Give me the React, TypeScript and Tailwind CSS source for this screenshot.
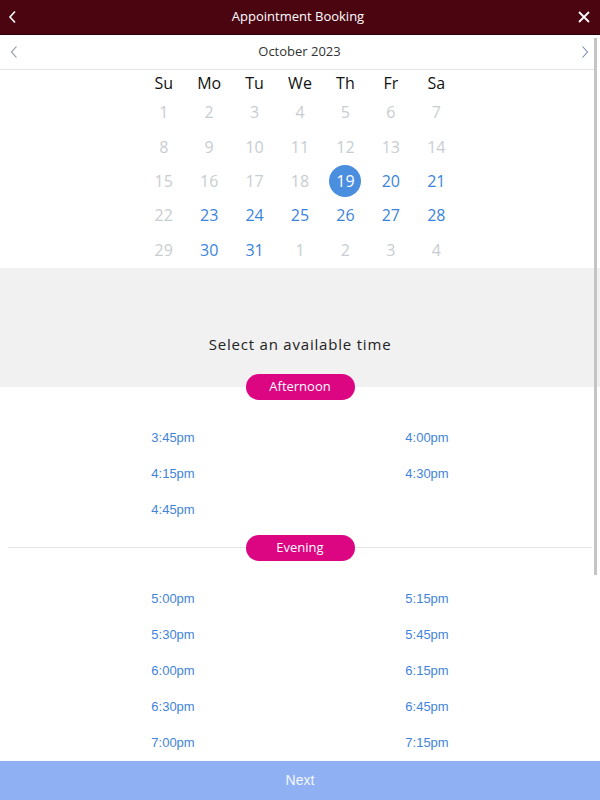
import React from "react";

const weekdays = ["Su", "Mo", "Tu", "We", "Th", "Fr", "Sa"];

type Day = { n: number; state: "off" | "on" | "sel" };

const days: Day[] = [];
for (let i = 1; i <= 18; i++) days.push({ n: i, state: "off" });
days.push({ n: 19, state: "sel" });
days.push({ n: 20, state: "on" });
days.push({ n: 21, state: "on" });
days.push({ n: 22, state: "off" });
for (let i = 23; i <= 28; i++) days.push({ n: i, state: "on" });
days.push({ n: 29, state: "off" });
days.push({ n: 30, state: "on" });
days.push({ n: 31, state: "on" });
for (let i = 1; i <= 4; i++) days.push({ n: i, state: "off" });

const afternoon = ["3:45pm", "4:00pm", "4:15pm", "4:30pm", "4:45pm"];
const evening = [
  "5:00pm",
  "5:15pm",
  "5:30pm",
  "5:45pm",
  "6:00pm",
  "6:15pm",
  "6:30pm",
  "6:45pm",
  "7:00pm",
  "7:15pm",
];

function Pill({ label }: { label: string }) {
  return (
    <div className="w-[109px] h-[26px] rounded-full bg-[#dc0582] text-white text-[13px] flex items-center justify-center font-['Open_Sans',sans-serif]">
      {label}
    </div>
  );
}

function Times({ items }: { items: string[] }) {
  return (
    <div className="w-[508px] mx-auto grid grid-cols-2">
      {items.map((t) => (
        <div
          key={t}
          className="h-[36px] flex items-center justify-center text-[13px] text-[#3f84da] font-['Liberation_Sans',Arial,sans-serif]"
        >
          {t}
        </div>
      ))}
    </div>
  );
}

export default function App() {
  return (
    <div className="w-[600px] h-[800px] flex flex-col bg-white font-['Open_Sans',sans-serif] overflow-hidden">
      <div className="h-[35px] shrink-0 bg-[#4a0511] border-b border-[#2a0208] flex items-center justify-between px-[7px] text-white">
        <svg width="12" height="14" viewBox="0 0 12 14" fill="none">
          <path d="M8 1.5L3 7l5 5.5" stroke="white" strokeWidth="1.6" />
        </svg>
        <div className="text-[13px] tracking-[0px]">Appointment Booking</div>
        <svg width="14" height="14" viewBox="0 0 14 14" fill="none" className="mr-[2px]">
          <path d="M2 2l10 10M12 2L2 12" stroke="white" strokeWidth="1.8" />
        </svg>
      </div>

      <div className="relative flex-1 overflow-hidden">
        <div className="absolute right-[3px] top-[3px] w-[3px] h-[537px] bg-[#c4c4c4]" />

        <div className="h-[35px] border-b border-[#e6e6e6] mr-[6px] flex items-center justify-between pl-[9px] pr-[4px]">
          <svg width="10" height="14" viewBox="0 0 10 14" fill="none">
            <path d="M7.5 1.5L2.5 7l5 5.5" stroke="#8a8f94" strokeWidth="1.1" />
          </svg>
          <div className="text-[13px] text-[#333]">October 2023</div>
          <svg width="10" height="14" viewBox="0 0 10 14" fill="none">
            <path d="M2.5 1.5L7.5 7l-5 5.5" stroke="#6f8db0" strokeWidth="1.1" />
          </svg>
        </div>

        <div className="w-[318px] mx-auto pt-[1px] pb-[1px]">
          <div className="grid grid-cols-7 h-[24px]">
            {weekdays.map((w) => (
              <div key={w} className="flex items-center justify-center text-[16px] text-[#111]">
                {w}
              </div>
            ))}
          </div>
          <div className="grid grid-cols-7 auto-rows-[34.4px]">
            {days.map((d, i) => (
              <div key={i} className="flex items-center justify-center">
                {d.state === "sel" ? (
                  <div className="w-[32px] h-[32px] rounded-full bg-[#4a8edf] text-white text-[16px] flex items-center justify-center">
                    {d.n}
                  </div>
                ) : (
                  <span
                    className={
                      d.state === "on"
                        ? "text-[16px] text-[#3a84db]"
                        : "text-[16px] text-[#c8cdd1]"
                    }
                  >
                    {d.n}
                  </span>
                )}
              </div>
            ))}
          </div>
        </div>

        <div className="h-[119px] bg-[#f1f1f1] pt-[66px] flex justify-center">
          <div className="text-[15px] leading-[20px] tracking-[0.8px] text-[#222]">
            Select an available time
          </div>
        </div>
        <div className="relative -mt-[13px] flex justify-center">
          <Pill label="Afternoon" />
        </div>
        <div className="pt-[20px]">
          <Times items={afternoon} />
        </div>

        <div className="mt-[7px] flex items-center px-[8px]">
          <div className="flex-1 h-px bg-[#e4e4e4]" />
          <Pill label="Evening" />
          <div className="flex-1 h-px bg-[#e4e4e4]" />
        </div>
        <div className="pt-[20px]">
          <Times items={evening} />
        </div>
      </div>

      <div className="h-[39px] shrink-0 bg-[#8fb0f2] flex items-center justify-center text-[14px] text-white/90 font-['Liberation_Sans',Arial,sans-serif]">
        Next
      </div>
    </div>
  );
}
